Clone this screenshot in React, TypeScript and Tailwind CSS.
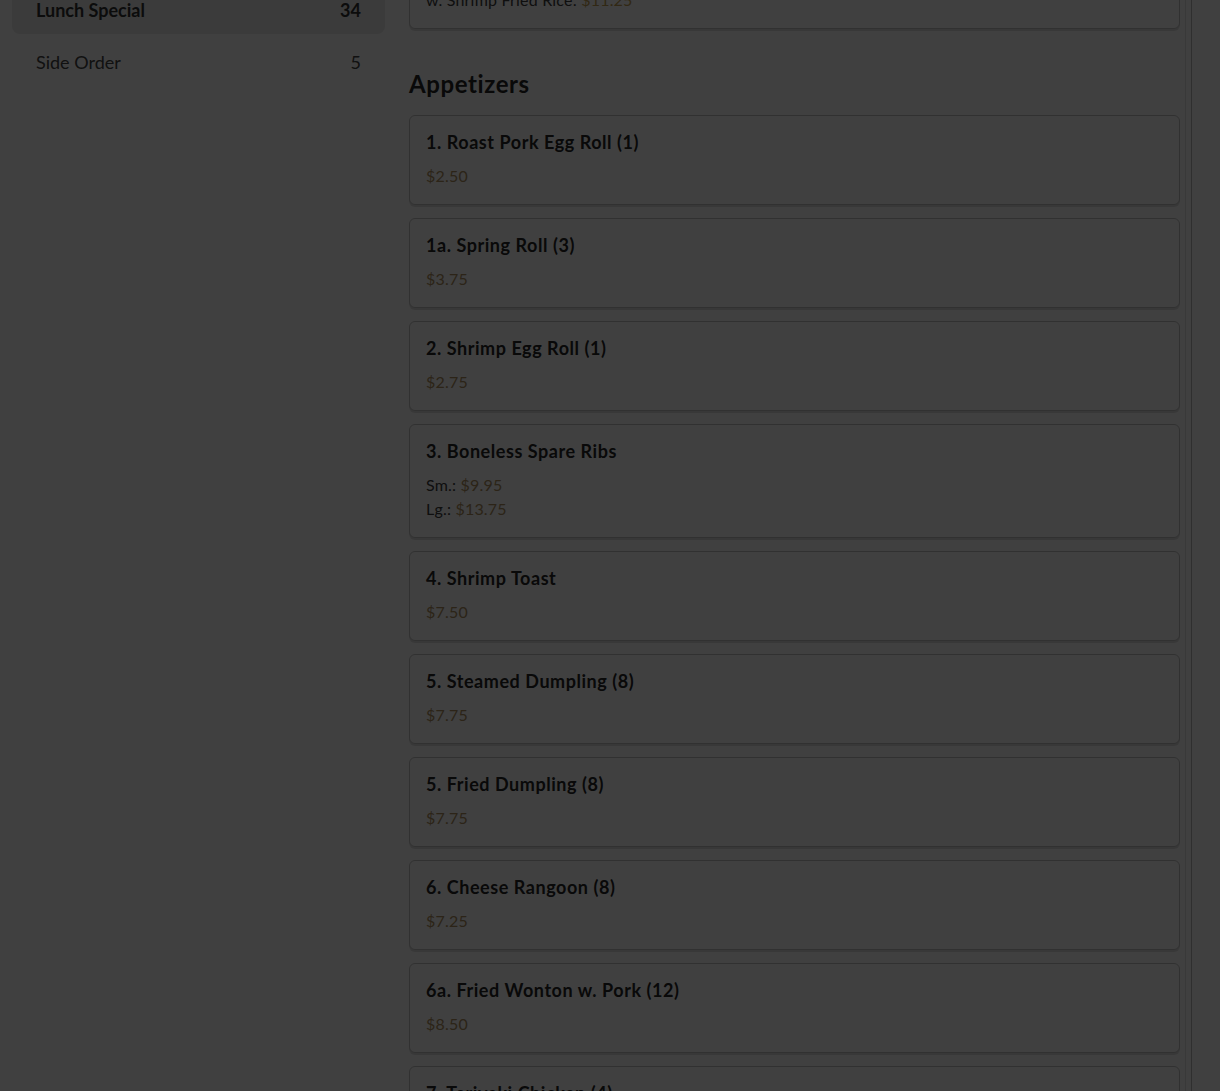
const font = { fontFamily: '"Lato", "Noto Sans", sans-serif' };

type Price = { label?: string; value: string };
type Item = { name: string; prices: Price[] };

const appetizers: Item[] = [
  { name: "1. Roast Pork Egg Roll (1)", prices: [{ value: "$2.50" }] },
  { name: "1a. Spring Roll (3)", prices: [{ value: "$3.75" }] },
  { name: "2. Shrimp Egg Roll (1)", prices: [{ value: "$2.75" }] },
  {
    name: "3. Boneless Spare Ribs",
    prices: [
      { label: "Sm.", value: "$9.95" },
      { label: "Lg.", value: "$13.75" },
    ],
  },
  { name: "4. Shrimp Toast", prices: [{ value: "$7.50" }] },
  { name: "5. Steamed Dumpling (8)", prices: [{ value: "$7.75" }] },
  { name: "5. Fried Dumpling (8)", prices: [{ value: "$7.75" }] },
  { name: "6. Cheese Rangoon (8)", prices: [{ value: "$7.25" }] },
  { name: "6a. Fried Wonton w. Pork (12)", prices: [{ value: "$8.50" }] },
  { name: "7. Teriyaki Chicken (4)", prices: [{ value: "$8.50" }] },
];

const categories = [
  { name: "Lunch Special", count: 34, active: true },
  { name: "Side Order", count: 5, active: false },
];

function PriceLine({ p }: { p: Price }) {
  return (
    <div className="text-[16px] leading-6 tracking-[0.2px] text-[#3c3c3c]">
      {p.label && <span>{p.label}: </span>}
      <span className="text-[#ae9060]">{p.value}</span>
    </div>
  );
}

function MenuCard({ item }: { item: Item }) {
  return (
    <div className="rounded-md border border-[#c2c2c2] bg-white px-4 py-4 shadow-[0_2px_0_rgba(0,0,0,0.12)]">
      <div className="text-[18px] font-bold leading-5 tracking-[0.55px] text-[#262626]">
        {item.name}
      </div>
      <div className="mt-3">
        {item.prices.map((p, i) => (
          <PriceLine key={i} p={p} />
        ))}
      </div>
    </div>
  );
}

export default function App() {
  return (
    <div className="relative h-[1091px] overflow-hidden bg-white" style={font}>
      <div className="flex gap-6 pl-3">
        <aside className="-mt-[14px] flex w-[373px] shrink-0 flex-col gap-1">
          {categories.map((c) => (
            <div
              key={c.name}
              className={
                c.active
                  ? "flex h-12 items-center justify-between rounded-lg bg-[#ebebeb] px-6 text-[18px] font-bold text-[#333]"
                  : "flex h-12 items-center justify-between rounded-lg px-6 text-[18px] text-[#444]"
              }
            >
              <span>{c.name}</span>
              <span>{c.count}</span>
            </div>
          ))}
        </aside>

        <main className="w-[783px] shrink-0 border-r border-[#bcbcbc] pr-[5px]">
          <div className="-mt-[29px] border-r border-[#e2e2e2] pr-[5px]">
            <div className="rounded-md border border-[#c2c2c2] bg-white px-4 py-4 shadow-[0_2px_0_rgba(0,0,0,0.12)]">
              <div className="text-[16px] leading-6 tracking-[0.2px] text-[#3c3c3c]">
                w. Shrimp Fried Rice: <span className="text-[#c4a050]">$11.25</span>
              </div>
            </div>
            <h2 className="mt-[39px] mb-[15px] text-[24px] font-bold leading-8 tracking-[0.6px] text-[#262626]">
              Appetizers
            </h2>
            <div className="flex flex-col gap-[13px]">
              {appetizers.map((it) => (
                <MenuCard key={it.name} item={it} />
              ))}
            </div>
          </div>
        </main>
      </div>

      {/* modal backdrop */}
      <div className="absolute inset-0 bg-black/75" />
    </div>
  );
}
